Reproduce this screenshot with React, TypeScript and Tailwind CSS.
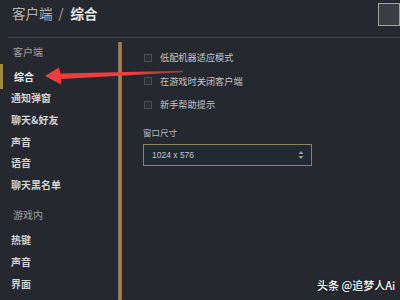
import React from "react";

const font = { fontFamily: '"Noto Sans CJK SC", "Noto Sans", sans-serif' };

function Check({ label }: { label: string }) {
  return (
    <div className="h-[23.5px] shrink-0 flex items-center">
      <div className="ml-[1px] w-[8px] h-[8px] border border-[#4a4d54] bg-[#2b2e35]" />
      <span className="ml-[8px] text-[9.2px] leading-none text-[#c4c4c4]">{label}</span>
    </div>
  );
}

function Item({ label, active }: { label: string; active?: boolean }) {
  return (
    <div className="relative h-[21.6px] shrink-0 flex items-center">
      {active && <div className="absolute left-0 top-[-2px] w-[3px] h-[25px] bg-[#a8854f]" />}
      <span
        className={
          "text-[10px] leading-none font-bold " +
          (active ? "pl-[14px] text-[#f0f0f0]" : "pl-[11px] text-[#d2d2d2]")
        }
      >
        {label}
      </span>
    </div>
  );
}

export default function App() {
  return (
    <div className="relative w-[400px] h-[300px] overflow-hidden bg-[#25282f]" style={font}>
      {/* header */}
      <div className="h-[37px] pl-[12px] pt-[3px] flex items-start">
        <span className="leading-[20px] text-[13.5px] text-[#b4b4b4]">客户端</span>
        <span className="leading-[20px] text-[13px] text-[#b4b4b4] ml-[6px]">/</span>
        <span className="leading-[20px] text-[13.5px] font-bold text-[#e6e6e6] ml-[7px]">综合</span>
      </div>
      <div className="ml-[8px] h-px bg-[#42454d]" />
      <div className="absolute right-0 top-[3px] w-[22px] h-[23px] border border-[#a9a391] bg-[#3a3e44]" />

      {/* body */}
      <div className="flex h-[262px] overflow-hidden">
        <div className="w-[118px] shrink-0 flex flex-col">
          <div className="h-[28px] shrink-0 flex items-center pl-[13px] text-[10px] leading-none text-[#a0a0a0]">客户端</div>
          <Item label="综合" active />
          <Item label="通知弹窗" />
          <Item label="聊天&好友" />
          <Item label="声音" />
          <Item label="语音" />
          <Item label="聊天黑名单" />
          <div className="h-[34px] shrink-0 pt-[4px] flex items-center pl-[13px] text-[10px] leading-none text-[#a0a0a0]">游戏内</div>
          <Item label="热键" />
          <Item label="声音" />
          <Item label="界面" />
          <Item label="其他" />
        </div>
        <div className="w-[4px] shrink-0 mt-[4px] bg-gradient-to-r from-[#8a6c42] via-[#a88656] to-[#8a6c42] rounded-t-[1px]" />
        <div className="flex-1 pl-[21px] pt-[8px] flex flex-col">
          <Check label="低配机器适应模式" />
          <Check label="在游戏时关闭客户端" />
          <Check label="新手帮助提示" />
          <div className="h-[18px] shrink-0 mt-[7px] flex items-center text-[8.5px] leading-none text-[#bdbdbd]">窗口尺寸</div>
          <div className="mt-[2.5px] shrink-0 w-[169px] h-[22px] border border-[#8c8162] bg-[#1f2a33] flex items-center justify-between pl-[8px] pr-[7px]">
            <span className="text-[8.5px] leading-none text-[#c6c6c6]" style={{ fontFamily: '"Liberation Sans", sans-serif' }}>
              1024 x 576
            </span>
            <svg width="6" height="10" viewBox="0 0 6 10">
              <polygon points="3,1 5.5,4 0.5,4" fill="#9a9a9a" />
              <polygon points="0.5,6 5.5,6 3,9" fill="#9a9a9a" />
            </svg>
          </div>
        </div>
      </div>

      {/* red arrow annotation */}
      <svg className="absolute left-0 top-0 pointer-events-none" width="400" height="300" viewBox="0 0 400 300">
        <defs>
          <linearGradient id="fade" x1="45" y1="0" x2="185" y2="0" gradientUnits="userSpaceOnUse">
            <stop offset="0" stopColor="#f03c3c" />
            <stop offset="0.6" stopColor="#ee4040" />
            <stop offset="1" stopColor="#e85050" stopOpacity="0.5" />
          </linearGradient>
        </defs>
        <polygon points="45,76 59,67.5 60.5,73.5 183,70.8 183,72.2 61,79 61,84.5" fill="url(#fade)" />
      </svg>

      {/* watermark */}
      <div className="absolute left-[317px] top-[277px] text-[11px] leading-[16px] font-medium text-white whitespace-nowrap [text-shadow:0_0_2px_rgba(0,0,0,0.6)]">
        头条 @追梦人Ai
      </div>
    </div>
  );
}
